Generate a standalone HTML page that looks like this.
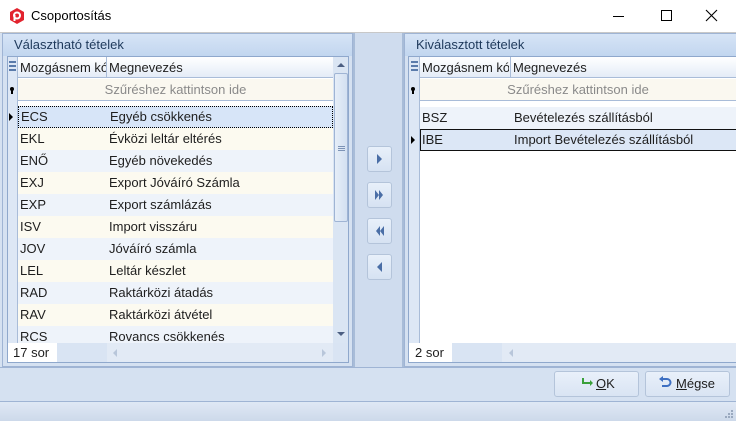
<!DOCTYPE html>
<html><head><meta charset="utf-8"><style>
*{margin:0;padding:0;box-sizing:border-box}
body{width:736px;height:421px;overflow:hidden;background:#d5e1f1;font-family:"Segoe UI","Liberation Sans","DejaVu Sans",sans-serif;font-size:13px;color:#1e1e1e;position:relative}
.a{position:absolute}
.t{white-space:nowrap}
.row{position:absolute;height:22px;line-height:22px}
.btn{position:absolute;width:25px;height:26px;border:1px solid #b4c4da;border-radius:3px;background:linear-gradient(#e8f0fa,#d6e2f2)}
</style></head><body>
<div class="a" style="left:0;top:0;width:736px;height:33px;background:#fff;border-bottom:1px solid #c8c8c8"></div>
<svg class="a" style="left:9px;top:8px" width="16" height="16" viewBox="0 0 16 16"><polygon points="8,0 15,4 15,12 8,16 1,12 1,4" fill="#e2232e"/><circle cx="8" cy="7.5" r="3" fill="none" stroke="#fff" stroke-width="2"/><rect x="4.5" y="7" width="2" height="6" fill="#fff"/></svg>
<div class="a t" style="left:31px;top:8px;font-size:13px;color:#000">Csoportosítás</div>
<div class="a" style="left:613px;top:16px;width:11px;height:1px;background:#000"></div>
<div class="a" style="left:661px;top:10px;width:11px;height:11px;border:1px solid #000"></div>
<svg class="a" style="left:705px;top:9px" width="13" height="13"><path d="M1 1L12 12M12 1L1 12" stroke="#000" stroke-width="1.1"/></svg>

<div class="a" style="left:2px;top:33px;width:351px;height:334px;border:1px solid #9fb4d4;background:#d5e1f1"></div>
<div class="a" style="left:3px;top:34px;width:349px;height:22px;background:linear-gradient(#d6e4f6,#c2d6ef)"></div>
<div class="a t" style="left:14px;top:37px;color:#1e395b">Választható tételek</div>
<div class="a" style="left:7px;top:56px;width:342px;height:307px;border:1px solid #8fa8cc;background:#fff"></div>
<div class="a" style="left:8px;top:57px;width:325px;height:21px;background:linear-gradient(#fff,#e4ecf7);border-bottom:1px solid #a9bcd8"></div>
<div class="a" style="left:8px;top:57px;width:10px;height:287px;background:#dde7f5;border-right:1px solid #a9bcd8"></div>
<div class="a" style="left:9px;top:61px;width:7px;height:2px;background:#5a7bab;box-shadow:0 4px #5a7bab,0 8px #5a7bab"></div>
<div class="a t" style="left:20px;top:60px;width:86px;overflow:hidden">Mozgásnem kód</div>
<div class="a" style="left:106px;top:57px;width:1px;height:21px;background:#a9bcd8"></div>
<div class="a t" style="left:109px;top:60px">Megnevezés</div>
<div class="a" style="left:18px;top:79px;width:315px;height:22px;background:#faf8f0;border-bottom:1px solid #a9bcd8"></div>
<div class="a" style="left:10px;top:87px;width:4px;height:4px;border-radius:2px;background:#000"></div><div class="a" style="left:11px;top:90px;width:2px;height:4px;background:#000"></div>
<div class="a t" style="left:18px;top:82px;width:315px;text-align:center;color:#8a8a8a">Szűréshez kattintson ide</div>
<div id="L"></div>
<div class="a" style="left:9px;top:113px;width:0;height:0;border-top:4px solid transparent;border-bottom:4px solid transparent;border-left:4px solid #000"></div>
<div class="a" style="left:333px;top:57px;width:15px;height:287px;background:#dae5f3"></div>
<div class="a" style="left:337px;top:63px;border-left:4px solid transparent;border-right:4px solid transparent;border-bottom:4px solid #4c5f82"></div>
<div class="a" style="left:334px;top:73px;width:14px;height:149px;border:1px solid #9fb4d4;border-radius:2px;background:linear-gradient(90deg,#e6eef8,#d3e0f1)"></div>
<div class="a" style="left:338px;top:146px;width:7px;height:1px;background:#7d93b6;box-shadow:0 2px #7d93b6,0 4px #7d93b6"></div>
<div class="a" style="left:337px;top:332px;border-left:4px solid transparent;border-right:4px solid transparent;border-top:4px solid #4c5f82"></div>
<div class="a" style="left:8px;top:343px;width:340px;height:19px;background:#d9e4f3"></div>
<div class="a" style="left:8px;top:343px;width:49px;height:19px;background:#fff"></div>
<div class="a t" style="left:13px;top:345px">17 sor</div>
<div class="a" style="left:107px;top:343px;width:226px;height:19px;background:#e2eaf5"></div>
<div class="a" style="left:113px;top:349px;border-top:4px solid transparent;border-bottom:4px solid transparent;border-right:4px solid #b8c6da"></div>
<div class="a" style="left:322px;top:349px;border-top:4px solid transparent;border-bottom:4px solid transparent;border-left:4px solid #b8c6da"></div>

<div class="a" style="left:353px;top:33px;width:51px;height:334px;background:#cfdcee;border-left:2px solid #a8bcd8;border-right:2px solid #a8bcd8"></div>
<div class="btn" style="left:367px;top:146px"></div>
<div class="btn" style="left:367px;top:182px"></div>
<div class="btn" style="left:367px;top:218px"></div>
<div class="btn" style="left:367px;top:254px"></div>
<svg class="a" style="left:367px;top:146px" width="25" height="135"><g fill="#4a6ea6"><path d="M10 8L15 13L10 18Z"/><path d="M8 44L12 49L8 54ZM12 44L16 49L12 54Z"/><path d="M17 80L13 85L17 90ZM13 80L9 85L13 90Z"/><path d="M15 116L10 121L15 126Z"/></g></svg>

<div class="a" style="left:404px;top:33px;width:334px;height:334px;border:1px solid #9fb4d4;background:#d5e1f1"></div>
<div class="a" style="left:405px;top:34px;width:331px;height:22px;background:linear-gradient(#d6e4f6,#c2d6ef)"></div>
<div class="a t" style="left:416px;top:37px;color:#1e395b">Kiválasztott tételek</div>
<div class="a" style="left:408px;top:56px;width:330px;height:307px;border:1px solid #8fa8cc;background:#fff"></div>
<div class="a" style="left:409px;top:57px;width:327px;height:21px;background:linear-gradient(#fff,#e4ecf7);border-bottom:1px solid #a9bcd8"></div>
<div class="a" style="left:409px;top:57px;width:11px;height:287px;background:#dde7f5;border-right:1px solid #a9bcd8"></div>
<div class="a" style="left:411px;top:61px;width:7px;height:2px;background:#5a7bab;box-shadow:0 4px #5a7bab,0 8px #5a7bab"></div>
<div class="a t" style="left:422px;top:60px;width:87px;overflow:hidden">Mozgásnem kód</div>
<div class="a" style="left:510px;top:57px;width:1px;height:21px;background:#a9bcd8"></div>
<div class="a t" style="left:513px;top:60px">Megnevezés</div>
<div class="a" style="left:420px;top:79px;width:316px;height:22px;background:#faf8f0;border-bottom:1px solid #a9bcd8"></div>
<div class="a" style="left:411px;top:87px;width:4px;height:4px;border-radius:2px;background:#000"></div><div class="a" style="left:412px;top:90px;width:2px;height:4px;background:#000"></div>
<div class="a t" style="left:420px;top:82px;width:316px;text-align:center;color:#8a8a8a">Szűréshez kattintson ide</div>
<div class="row" style="left:420px;top:107px;width:316px;background:#eef3fa"><span class="a t" style="left:2px">BSZ</span><span class="a t" style="left:94px">Bevételezés szállításból</span></div>
<div class="row" style="left:420px;top:129px;width:318px;background:#dce7f6;border:1px solid #111"><span class="a t" style="left:1px;line-height:20px">IBE</span><span class="a t" style="left:93px;line-height:20px">Import Bevételezés szállításból</span></div>
<div class="a" style="left:411px;top:136px;border-top:4px solid transparent;border-bottom:4px solid transparent;border-left:4px solid #000"></div>
<div class="a" style="left:409px;top:343px;width:327px;height:19px;background:#d9e4f3"></div>
<div class="a" style="left:409px;top:343px;width:43px;height:19px;background:#fff"></div>
<div class="a t" style="left:415px;top:345px">2 sor</div>
<div class="a" style="left:502px;top:343px;width:234px;height:19px;background:#e2eaf5"></div>
<div class="a" style="left:509px;top:349px;border-top:4px solid transparent;border-bottom:4px solid transparent;border-right:4px solid #b8c6da"></div>

<div class="a" style="left:0;top:367px;width:736px;height:1px;background:#9fb4d4"></div>
<div class="a" style="left:0;top:401px;width:736px;height:20px;background:linear-gradient(#dfe8f5,#cdd9ea);border-top:1px solid #9fb4d4"></div>
<div class="a" style="left:554px;top:371px;width:85px;height:26px;border:1px solid #b4c4da;border-radius:3px;background:linear-gradient(#e9f0fa,#d9e4f3)"></div>
<div class="a" style="left:645px;top:371px;width:85px;height:26px;border:1px solid #b4c4da;border-radius:3px;background:linear-gradient(#e9f0fa,#d9e4f3)"></div>
<svg class="a" style="left:581px;top:377px" width="14" height="12"><path d="M2 1V6H11" fill="none" stroke="#3aa03a" stroke-width="2"/><path d="M9 3L12 6L9 9Z" fill="#3aa03a"/></svg>
<div class="a t" style="left:596px;top:376px;font-size:13px"><u>O</u>K</div>
<svg class="a" style="left:658px;top:376px" width="14" height="13"><path d="M3 3H9A3.5 3.5 0 0 1 9 10H4" fill="none" stroke="#3d6fc2" stroke-width="2"/><path d="M5 0L1 3L5 6Z" fill="#3d6fc2"/></svg>
<div class="a t" style="left:676px;top:376px;font-size:13px"><u>M</u>égse</div>
<svg class="a" style="left:724px;top:409px" width="10" height="10" fill="#9aa9bf"><rect x="7" y="1" width="2" height="2"/><rect x="4" y="4" width="2" height="2"/><rect x="7" y="4" width="2" height="2"/><rect x="1" y="7" width="2" height="2"/><rect x="4" y="7" width="2" height="2"/><rect x="7" y="7" width="2" height="2"/></svg>

<script>
var d=[["ECS","Egyéb csökkenés"],["EKL","Évközi leltár eltérés"],["ENŐ","Egyéb növekedés"],["EXJ","Export Jóváíró Számla"],["EXP","Export számlázás"],["ISV","Import visszáru"],["JOV","Jóváíró számla"],["LEL","Leltár készlet"],["RAD","Raktárközi átadás"],["RAV","Raktárközi átvétel"],["RCS","Rovancs csökkenés"]];
var h="";
d.forEach(function(r,i){var top=106+i*22;var hh=Math.min(22,343-top);var bg=i==0?"#d7e5f8":(i%2?"#fcfaf0":"#eef3fa");
var b=i==0?"border:1px dotted #000;":"";
h+='<div class="row" style="left:18px;top:'+top+'px;width:315px;height:'+hh+'px;overflow:hidden;background:'+bg+';'+b+'"><span class="a t" style="left:2px;top:'+(i==0?-1:0)+'px">'+r[0]+'</span><span class="a t" style="left:91px;top:'+(i==0?-1:0)+'px">'+r[1]+'</span></div>';});
document.getElementById("L").innerHTML=h;
</script>
</body></html>
